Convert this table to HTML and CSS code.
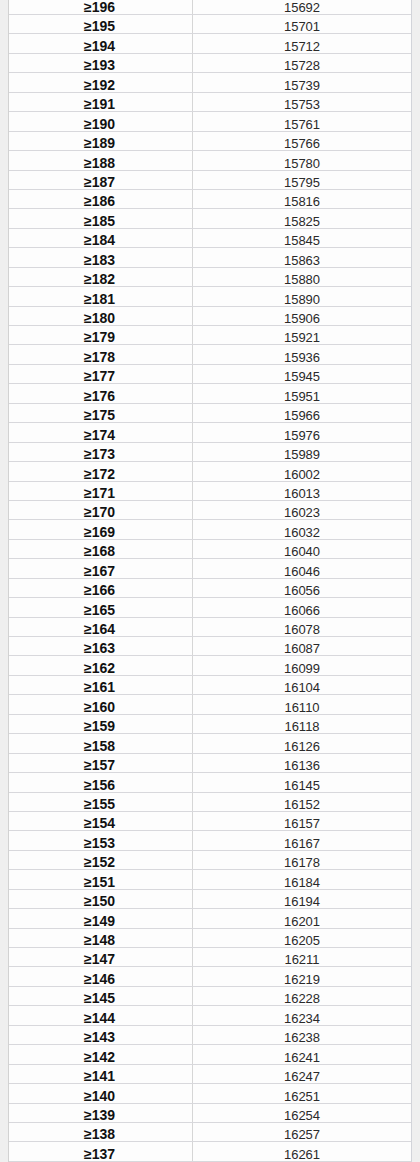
FILE: index.html
```html
<!DOCTYPE html>
<html>
<head>
<meta charset="utf-8">
<link rel="stylesheet" href="styles.css">
</head>
<body>
<div class="sheet">
<div class="row"><div class="k">≥196</div><div class="v">15692</div></div>
<div class="row"><div class="k">≥195</div><div class="v">15701</div></div>
<div class="row"><div class="k">≥194</div><div class="v">15712</div></div>
<div class="row"><div class="k">≥193</div><div class="v">15728</div></div>
<div class="row"><div class="k">≥192</div><div class="v">15739</div></div>
<div class="row"><div class="k">≥191</div><div class="v">15753</div></div>
<div class="row"><div class="k">≥190</div><div class="v">15761</div></div>
<div class="row"><div class="k">≥189</div><div class="v">15766</div></div>
<div class="row"><div class="k">≥188</div><div class="v">15780</div></div>
<div class="row"><div class="k">≥187</div><div class="v">15795</div></div>
<div class="row"><div class="k">≥186</div><div class="v">15816</div></div>
<div class="row"><div class="k">≥185</div><div class="v">15825</div></div>
<div class="row"><div class="k">≥184</div><div class="v">15845</div></div>
<div class="row"><div class="k">≥183</div><div class="v">15863</div></div>
<div class="row"><div class="k">≥182</div><div class="v">15880</div></div>
<div class="row"><div class="k">≥181</div><div class="v">15890</div></div>
<div class="row"><div class="k">≥180</div><div class="v">15906</div></div>
<div class="row"><div class="k">≥179</div><div class="v">15921</div></div>
<div class="row"><div class="k">≥178</div><div class="v">15936</div></div>
<div class="row"><div class="k">≥177</div><div class="v">15945</div></div>
<div class="row"><div class="k">≥176</div><div class="v">15951</div></div>
<div class="row"><div class="k">≥175</div><div class="v">15966</div></div>
<div class="row"><div class="k">≥174</div><div class="v">15976</div></div>
<div class="row"><div class="k">≥173</div><div class="v">15989</div></div>
<div class="row"><div class="k">≥172</div><div class="v">16002</div></div>
<div class="row"><div class="k">≥171</div><div class="v">16013</div></div>
<div class="row"><div class="k">≥170</div><div class="v">16023</div></div>
<div class="row"><div class="k">≥169</div><div class="v">16032</div></div>
<div class="row"><div class="k">≥168</div><div class="v">16040</div></div>
<div class="row"><div class="k">≥167</div><div class="v">16046</div></div>
<div class="row"><div class="k">≥166</div><div class="v">16056</div></div>
<div class="row"><div class="k">≥165</div><div class="v">16066</div></div>
<div class="row"><div class="k">≥164</div><div class="v">16078</div></div>
<div class="row"><div class="k">≥163</div><div class="v">16087</div></div>
<div class="row"><div class="k">≥162</div><div class="v">16099</div></div>
<div class="row"><div class="k">≥161</div><div class="v">16104</div></div>
<div class="row"><div class="k">≥160</div><div class="v">16110</div></div>
<div class="row"><div class="k">≥159</div><div class="v">16118</div></div>
<div class="row"><div class="k">≥158</div><div class="v">16126</div></div>
<div class="row"><div class="k">≥157</div><div class="v">16136</div></div>
<div class="row"><div class="k">≥156</div><div class="v">16145</div></div>
<div class="row"><div class="k">≥155</div><div class="v">16152</div></div>
<div class="row"><div class="k">≥154</div><div class="v">16157</div></div>
<div class="row"><div class="k">≥153</div><div class="v">16167</div></div>
<div class="row"><div class="k">≥152</div><div class="v">16178</div></div>
<div class="row"><div class="k">≥151</div><div class="v">16184</div></div>
<div class="row"><div class="k">≥150</div><div class="v">16194</div></div>
<div class="row"><div class="k">≥149</div><div class="v">16201</div></div>
<div class="row"><div class="k">≥148</div><div class="v">16205</div></div>
<div class="row"><div class="k">≥147</div><div class="v">16211</div></div>
<div class="row"><div class="k">≥146</div><div class="v">16219</div></div>
<div class="row"><div class="k">≥145</div><div class="v">16228</div></div>
<div class="row"><div class="k">≥144</div><div class="v">16234</div></div>
<div class="row"><div class="k">≥143</div><div class="v">16238</div></div>
<div class="row"><div class="k">≥142</div><div class="v">16241</div></div>
<div class="row"><div class="k">≥141</div><div class="v">16247</div></div>
<div class="row"><div class="k">≥140</div><div class="v">16251</div></div>
<div class="row"><div class="k">≥139</div><div class="v">16254</div></div>
<div class="row"><div class="k">≥138</div><div class="v">16257</div></div>
<div class="row"><div class="k">≥137</div><div class="v">16261</div></div>
</div>
</body>
</html>
```

FILE: styles.css
```css
html, body {
  margin: 0;
  padding: 0;
  background: #efefef;
  overflow: hidden;
  height: 1162px;
}
.sheet {
  margin: -4.45px 0 0 8px;
  width: 404px;
  box-sizing: border-box;
  border-left: 1px solid #d2d2d2;
  border-right: 1px solid #d2d4da;
  background: #fdfdfd;
  font-family: "Liberation Sans", Arial, sans-serif;
  font-size: 13px;
  color: #1e1e1e;
}
.row {
  display: grid;
  grid-template-columns: 184px 218px;
  height: 19.45px;
  box-sizing: border-box;
  border-bottom: 1px solid #d8d8dc;
}
.k, .v {
  display: flex;
  align-items: flex-end;
  justify-content: center;
  line-height: 13px;
}
.k {
  font-size: 14px;
  font-weight: bold;
  color: #111;
  border-right: 1px solid #d6d6d6;
  padding-right: 2px;
}
.v {
  color: #2a2a2a;
}
```
